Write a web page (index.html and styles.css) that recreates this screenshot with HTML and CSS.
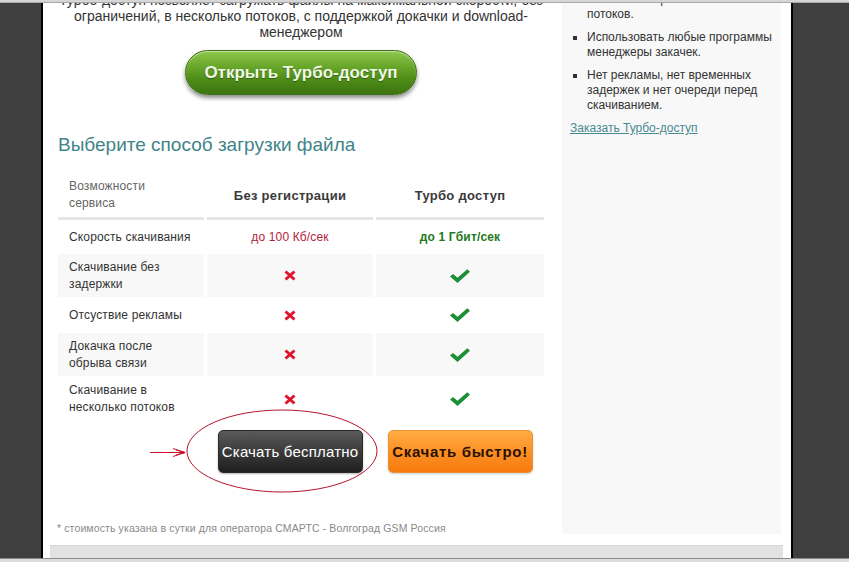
FILE: index.html
```html
<!DOCTYPE html>
<html lang="ru">
<head>
    <meta charset="UTF-8">
    <title>Выберите способ загрузки файла</title>
    <link rel="stylesheet" href="styles.css">
</head>
<body>
    <div class="chrome-top"></div>
    <div class="page">
        <div class="columns">
            <div class="main">
                <p class="intro">Турбо-доступ позволяет загружать файлы на максимальной скорости, без<br>ограничений, в несколько потоков, с поддержкой докачки и download-<br>менеджером</p>
                <div class="turbo-wrap">
                    <a class="turbo-button" href="#">Открыть Турбо-доступ</a>
                </div>

                <h2 class="choose-title">Выберите способ загрузки файла</h2>

                <div class="compare">
                    <div class="cell head first">Возможности<br>сервиса</div>
                    <div class="cell head">Без регистрации</div>
                    <div class="cell head">Турбо доступ</div>

                    <div class="cell first">Скорость скачивания</div>
                    <div class="cell"><span class="speed-slow">до 100 Кб/сек</span></div>
                    <div class="cell"><span class="speed-fast">до 1 Гбит/сек</span></div>

                    <div class="cell first alt">Скачивание без<br>задержки</div>
                    <div class="cell alt"><svg class="no" viewBox="0 0 12 11"><path d="M1.5 1.5 L10.5 9.5 M10.5 1.5 L1.5 9.5"/></svg></div>
                    <div class="cell alt"><svg class="yes" viewBox="0 0 20 14"><path d="M0 7.5 L3 5 L7.5 8.8 L17.3 0.2 L20 2.8 L7.5 14 Z"/></svg></div>

                    <div class="cell first">Отсуствие рекламы</div>
                    <div class="cell"><svg class="no" viewBox="0 0 12 11"><path d="M1.5 1.5 L10.5 9.5 M10.5 1.5 L1.5 9.5"/></svg></div>
                    <div class="cell"><svg class="yes" viewBox="0 0 20 14"><path d="M0 7.5 L3 5 L7.5 8.8 L17.3 0.2 L20 2.8 L7.5 14 Z"/></svg></div>

                    <div class="cell first alt">Докачка после<br>обрыва связи</div>
                    <div class="cell alt"><svg class="no" viewBox="0 0 12 11"><path d="M1.5 1.5 L10.5 9.5 M10.5 1.5 L1.5 9.5"/></svg></div>
                    <div class="cell alt"><svg class="yes" viewBox="0 0 20 14"><path d="M0 7.5 L3 5 L7.5 8.8 L17.3 0.2 L20 2.8 L7.5 14 Z"/></svg></div>

                    <div class="cell first">Скачивание в<br>несколько потоков</div>
                    <div class="cell"><svg class="no" viewBox="0 0 12 11"><path d="M1.5 1.5 L10.5 9.5 M10.5 1.5 L1.5 9.5"/></svg></div>
                    <div class="cell"><svg class="yes" viewBox="0 0 20 14"><path d="M0 7.5 L3 5 L7.5 8.8 L17.3 0.2 L20 2.8 L7.5 14 Z"/></svg></div>
                </div>

                <div class="actions">
                    <a class="btn-free" href="#">Скачать бесплатно</a>
                    <a class="btn-fast" href="#">Скачать быстро!</a>
                    <!-- пометка красным поверх кнопки -->
                    <svg class="annotation" viewBox="0 0 250 95" width="250" height="95">
                        <ellipse cx="142" cy="46" rx="95" ry="41" fill="none" stroke="#b5142c" stroke-width="1"/>
                        <path d="M10 47.5 L45 47.5 M33 43.5 L45 47.5 M33 51.5 L45 47.5 M36 45 L45 47.5 M36 50 L45 47.5" fill="none" stroke="#c8102a" stroke-width="1"/>
                        <path d="M41 46 L46 47.5 L41 49 Z" fill="#c8102a"/>
                    </svg>
                </div>

                <p class="footnote">* стоимость указана в сутки для оператора СМАРТС - Волгоград GSM Россия</p>
            </div>

            <div class="sidebar">
                <ul class="perks">
                    <li>Скачивание файла в несколько потоков.</li>
                    <li>Использовать любые программы менеджеры закачек.</li>
                    <li>Нет рекламы, нет временных задержек и нет очереди перед скачиванием.</li>
                </ul>
                <a class="order-link" href="#">Заказать Турбо-доступ</a>
            </div>
        </div>
        <div class="bottom-bar"></div>
    </div>
    <div class="chrome-bottom"></div>
</body>
</html>
```

FILE: styles.css
```css
html, body {
    height: 100%;
}
body {
    margin: 0;
    background-color: #3f3f3f;
    font-family: 'Liberation Sans', Arial, sans-serif;
    color: #333;
    display: flex;
    flex-direction: column;
    overflow: hidden;
}
.chrome-top {
    height: 2px;
    background-color: #d6d6d6;
    border-bottom: 1px solid #a8a8a8;
    flex-shrink: 0;
    position: relative;
    z-index: 2;
}
.chrome-bottom {
    height: 3px;
    background-color: #dcdcdc;
    border-top: 1px solid #8c8c8c;
    flex-shrink: 0;
}
.page {
    flex: 1;
    width: 748px;
    margin-left: 41px;
    border-left: 2px solid #000;
    border-right: 2px solid #000;
    background-color: #fff;
    display: flex;
    flex-direction: column;
    overflow: hidden;
}
.columns {
    flex: 1;
    display: flex;
    padding-left: 14px;
}
.main {
    width: 488px;
}
.intro {
    margin: -11px 0 0;
    font-size: 14px;
    line-height: 16px;
    text-align: center;
    color: #333;
}
.turbo-wrap {
    margin-top: 10px;
    display: flex;
    justify-content: center;
}
.turbo-button {
    display: block;
    width: 232px;
    height: 45px;
    box-sizing: border-box;
    border-radius: 23px;
    border: 1px solid #3b6f12;
    background: linear-gradient(to bottom, #8cc84c 0%, #6aa82c 35%, #4f8d18 65%, #3c7410 100%);
    box-shadow: 0 3px 4px rgba(0, 0, 0, 0.45), inset 0 1px 1px rgba(255, 255, 255, 0.5);
    color: #eef8e4;
    font-weight: bold;
    font-size: 17px;
    line-height: 43px;
    text-align: center;
    text-decoration: none;
    text-shadow: 0 1px 1px rgba(0, 0, 0, 0.35);
}
.choose-title {
    margin: 38px 0 0 1px;
    font-size: 19px;
    line-height: 24px;
    font-weight: normal;
    color: #3f8489;
}
.compare {
    margin: 15px 0 0 1px;
    display: grid;
    grid-template-columns: 146px 166px 168px;
    grid-template-rows: 48px 30px 43px 32px 43px 42px;
    column-gap: 3px;
    row-gap: 2px;
}
.cell {
    display: flex;
    align-items: center;
    justify-content: center;
    font-size: 12px;
    line-height: 17px;
    letter-spacing: 0.15px;
}
.cell.first {
    justify-content: flex-start;
    padding-left: 11px;
}
.cell.alt {
    background-color: #f8f8f8;
}
.cell.head {
    border-bottom: 3px solid #e5e5e5;
    font-size: 13px;
    font-weight: bold;
    color: #3a3a3a;
    letter-spacing: 0.3px;
    padding-top: 2px;
}
.cell.head.first {
    font-size: 12px;
    font-weight: normal;
    color: #666;
    letter-spacing: 0.15px;
    padding-top: 0;
}
.speed-slow {
    color: #b3233a;
}
.speed-fast {
    color: #1e7a22;
    font-weight: bold;
}
.no {
    width: 12px;
    height: 11px;
}
.no path {
    fill: none;
    stroke: #e0122c;
    stroke-width: 3;
}
.yes {
    width: 20px;
    height: 14px;
}
.yes path {
    fill: #1c8e36;
}
.actions {
    position: relative;
    margin: 10px 0 0 1px;
    display: grid;
    grid-template-columns: 146px 166px 168px;
    column-gap: 3px;
}
.btn-free, .btn-fast {
    display: block;
    width: 145px;
    height: 43px;
    box-sizing: border-box;
    border-radius: 5px;
    font-size: 15px;
    line-height: 41px;
    text-align: center;
    text-decoration: none;
    justify-self: center;
}
.btn-free {
    grid-column: 2;
    border: 1px solid #2a2a2a;
    background: linear-gradient(to bottom, #5a5a5a 0%, #3a3a3a 50%, #1f1f1f 100%);
    box-shadow: 0 1px 2px rgba(0, 0, 0, 0.3);
    color: #fff;
    letter-spacing: 0.2px;
}
.btn-fast {
    grid-column: 3;
    border: 1px solid #e8922e;
    background: linear-gradient(to bottom, #ffad45 0%, #fd9125 50%, #f77a0e 100%);
    box-shadow: 0 1px 2px rgba(0, 0, 0, 0.2);
    color: #2a1200;
    font-weight: bold;
    letter-spacing: 0.7px;
}
.annotation {
    position: absolute;
    left: 82px;
    top: -25px;
    pointer-events: none;
}
.footnote {
    margin: 49px 0 0;
    font-size: 10.5px;
    line-height: 12px;
    letter-spacing: 0.12px;
    color: #8a8a8a;
}
.sidebar {
    width: 219px;
    margin-left: 17px;
    margin-bottom: 11px;
    box-sizing: border-box;
    padding: 0 3px 0 8px;
    background-color: #f8f8f8;
    font-size: 12px;
    line-height: 15px;
}
.perks {
    margin: -11px 0 0;
    padding-left: 17px;
    list-style: square;
}
.perks li {
    margin-bottom: 8px;
}
.order-link {
    display: block;
    margin-top: 6px;
    color: #4a8a93;
}
.bottom-bar {
    height: 13px;
    margin: 0 8px 0 7px;
    background-color: #e2e2e2;
    border-top: 1px solid #d6d6d6;
    box-sizing: border-box;
    flex-shrink: 0;
}
```
